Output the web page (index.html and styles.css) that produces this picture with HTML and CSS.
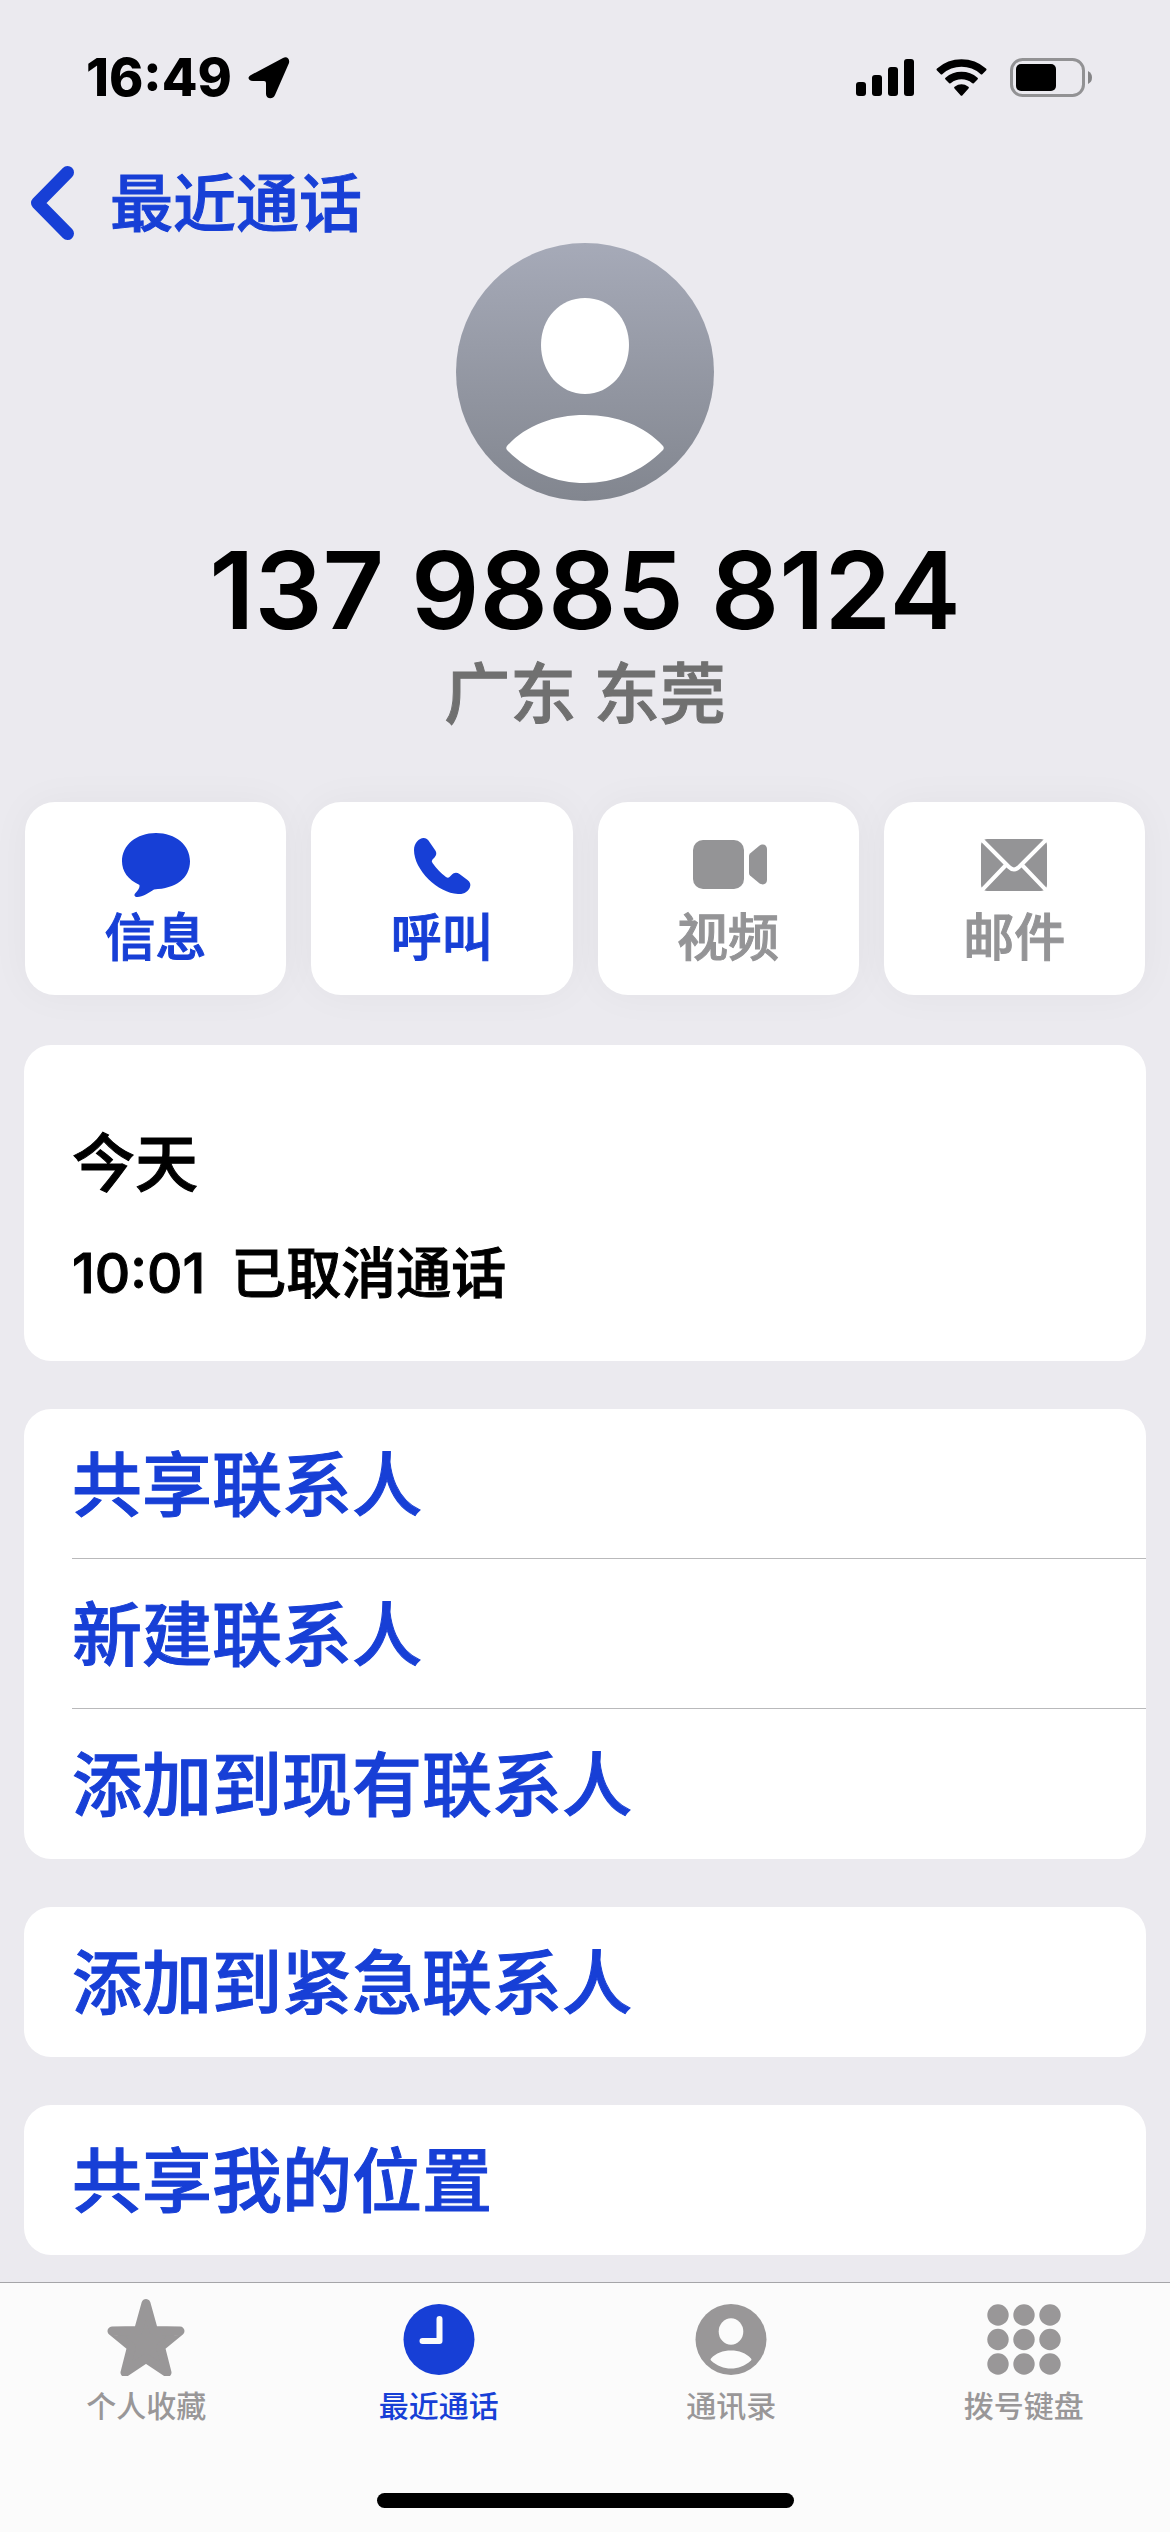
FILE: index.html
```html
<!DOCTYPE html>
<html lang="zh-CN">
<head>
<meta charset="utf-8">
<meta name="viewport" content="width=device-width, initial-scale=1">
<title>最近通话</title>
<link rel="stylesheet" href="styles.css">
</head>
<body>
<div class="screen">
  <header class="status-bar">
    <div class="status-left">
      <span class="clock">16:49</span>
      <svg class="location" width="42" height="42" viewBox="0 0 42 42" aria-hidden="true"><path d="M3 18 35 1c4-2 7 1 6 5L27 38c-2 5-9 4-9-1V26q0-2-2-2H5c-5 0-6-4-2-6z"/></svg>
    </div>
    <div class="status-right">
      <svg width="58" height="38" viewBox="0 0 58 38" aria-hidden="true"><rect y="23" width="10" height="14" rx="3"/><rect x="16" y="16" width="10" height="21" rx="3"/><rect x="32" y="8" width="10" height="29" rx="3"/><rect x="48" width="10" height="37" rx="3"/></svg>
      <svg width="52" height="38" viewBox="0 0 52 38" aria-hidden="true"><path d="M1 11.500Q0 10.500 1 9.600A36.500 36.500 0 0 1 50 9.600q1 .9 0 1.900l-3.500 3.500q-1 1-2 0a28.500 28.500 0 0 0-38 0q-1 1-2 0z"/><path d="M9.500 20.500q-1-1 0-1.800a24.500 24.500 0 0 1 32 0q1 .8 0 1.800L38 24q-1 1-2 .1a16.500 16.500 0 0 0-21 0q-1 .9-2-.1z"/><path d="M18.500 29.500q-1-1 .1-1.800a12 12 0 0 1 13.800 0q1.100.8.100 1.800l-6 6.700q-1 1-2 0z"/></svg>
      <svg width="82" height="40" viewBox="0 0 82 40" aria-hidden="true"><rect x="1.500" y="1.500" width="72" height="36" rx="11" fill="none" stroke="#929294" stroke-width="3"/><rect x="6" y="6" width="40" height="27" rx="5"/><path d="M78 13q4 2 4 6.500T78 26z" fill="#858587"/></svg>
    </div>
  </header>

  <nav class="nav-bar">
    <a class="back" href="#recents">
      <svg width="44" height="74" viewBox="0 0 44 74" aria-hidden="true"><path d="M37.500 6.500 7.500 37l30 30.500" fill="none" stroke="currentColor" stroke-width="13" stroke-linecap="round" stroke-linejoin="round"/></svg>
      <span>最近通话</span>
    </a>
  </nav>

  <main class="content">
    <section class="profile">
      <svg class="avatar" width="258" height="258" viewBox="0 0 258 258" aria-hidden="true">
        <defs><linearGradient id="avatar-fill" x1="0" y1="0" x2="0" y2="1"><stop offset="0" stop-color="#a6aab8"/><stop offset="1" stop-color="#82868f"/></linearGradient></defs>
        <circle cx="129" cy="129" r="129" fill="url(#avatar-fill)"/>
        <path d="M129 55c25 0 44 20 44 47s-19 49-44 49-44-22-44-49 19-47 44-47z" fill="#fff"/>
        <path d="M51 207c-1-1-1-3 0-4 18-20 46-31 78-31s60 11 78 31c1 1 1 3 0 4-22 22-49 33-78 33s-56-11-78-33z" fill="#fff"/>
      </svg>
      <h1 class="number">137 9885 8124</h1>
      <p class="region">广东 东莞</p>
    </section>

    <div class="actions">
      <button class="action" type="button">
        <svg width="70" height="66" viewBox="0 0 70 66" aria-hidden="true"><path d="M35 1c19.500 0 34 13.500 34 32 0 19-14.500 31-36 31.500-5 4-11.500 8-16.500 8.500-3 0-4-2-2-4.500 2.500-3 4.500-6 4-9C7 54 1 44 1 33 1 14.500 15.500 1 35 1z" transform="scale(1 .89)"/></svg>
        <span>信息</span>
      </button>
      <button class="action" type="button">
        <svg width="70" height="66" viewBox="0 0 70 66" aria-hidden="true"><path d="M7 18C7 11 12 6 16.500 6c2.500 0 4.500 1.500 6 4l5.500 8c2 3 1.500 5-.5 7.500l-2 2q-1.500 1.500 0 3.500 6 8.500 13.500 14 2 1.500 3.500 0l2-2c2.500-2.500 5-3 8-1l8 6c2.500 2 3.500 4 2.500 7-1.500 4.500-6 7.500-12 7C31 61 7 38 7 18z"/></svg>
        <span>呼叫</span>
      </button>
      <button class="action" type="button" disabled>
        <svg width="78" height="66" viewBox="-4 0 78 66" aria-hidden="true"><rect y="8" width="51" height="49" rx="10"/><path d="M56 24q0-1.500 1-2.500l9-7.500c4-3 8-1 8 3v31c0 4-4 6-8 3l-9-7.500q-1-1-1-2.500z"/></svg>
        <span>视频</span>
      </button>
      <button class="action" type="button" disabled>
        <svg width="68" height="66" viewBox="0 0 68 66" aria-hidden="true"><rect x="1" y="7" width="66" height="52" rx="6"/><path d="M1 7 29 35q5 5 10 0L67 7M1 59 26 33M67 59 42 33" fill="none" stroke="#fff" stroke-width="4"/></svg>
        <span>邮件</span>
      </button>
    </div>

    <section class="card history">
      <h2>今天</h2>
      <p><time>10:01</time><span>已取消通话</span></p>
    </section>

    <section class="card">
      <button class="row" type="button"><span>共享联系人</span></button>
      <button class="row" type="button"><span>新建联系人</span></button>
      <button class="row" type="button"><span>添加到现有联系人</span></button>
    </section>

    <section class="card">
      <button class="row" type="button"><span>添加到紧急联系人</span></button>
    </section>

    <section class="card">
      <button class="row" type="button"><span>共享我的位置</span></button>
    </section>
  </main>

  <footer class="tab-bar">
    <nav class="tabs">
      <a class="tab" href="#favorites">
        <svg width="78" height="78" viewBox="0 0 78 78" aria-hidden="true"><path d="M39 5.500 46.500 32.500 73 33 53.500 49 60 74.500 39 60.500 18 74.500 24.500 49 5 33 31.500 32.500z" fill="currentColor" stroke="currentColor" stroke-width="9" stroke-linejoin="round"/></svg>
        <span>个人收藏</span>
      </a>
      <a class="tab tab-active" href="#recents" aria-current="page">
        <svg width="78" height="78" viewBox="0 0 78 78" aria-hidden="true"><circle cx="39" cy="41.500" r="35.500"/><path d="M39.500 21v22H22.500" fill="none" stroke="#fbfbfb" stroke-width="6" stroke-linecap="round" stroke-linejoin="round"/></svg>
        <span>最近通话</span>
      </a>
      <a class="tab" href="#contacts">
        <svg width="78" height="78" viewBox="0 0 78 78" aria-hidden="true"><circle cx="39" cy="41.500" r="35.500"/><ellipse cx="39" cy="33.500" rx="12.300" ry="13.200" fill="#fbfbfb"/><path d="M19 62.500q-1-1 0-2c5-5.500 12-8 20-8s15 2.500 20 8q1 1 0 2c-6 5.500-13 8-20 8s-14-2.500-20-8z" fill="#fbfbfb"/></svg>
        <span>通讯录</span>
      </a>
      <a class="tab" href="#keypad">
        <svg width="78" height="78" viewBox="0 0 78 78" aria-hidden="true"><circle cx="13" cy="17" r="10.700"/><circle cx="39" cy="17" r="10.700"/><circle cx="65" cy="17" r="10.700"/><circle cx="13" cy="41.500" r="10.700"/><circle cx="39" cy="41.500" r="10.700"/><circle cx="65" cy="41.500" r="10.700"/><circle cx="13" cy="66" r="10.700"/><circle cx="39" cy="66" r="10.700"/><circle cx="65" cy="66" r="10.700"/></svg>
        <span>拨号键盘</span>
      </a>
    </nav>
    <div class="home-indicator"></div>
  </footer>
</div>
</body>
</html>
```
FILE: styles.css
```css
:root {
  --blue: #173fd6;
  --gray: #949496;
  --page: #ebeaef;
}

* {
  box-sizing: border-box;
}

body {
  margin: 0;
  background: var(--page);
  color: #000;
  font-family: Inter, "Noto Sans CJK SC", sans-serif;
  font-weight: 500;
}

h1, h2, p {
  margin: 0;
}

a {
  color: inherit;
  text-decoration: none;
}

button {
  border: 0;
  padding: 0;
  background: none;
  color: inherit;
  font: inherit;
}

svg {
  display: block;
  flex: none;
  fill: currentColor;
}

.screen {
  display: flex;
  flex-direction: column;
  min-height: 100vh;
}

.status-bar {
  display: flex;
  justify-content: space-between;
  align-items: center;
  padding: 48px 78px 0 86px;
}

.status-left,
.status-right {
  display: flex;
  align-items: center;
}

.status-left {
  gap: 16px;
}

.status-right {
  gap: 22px;
}

.clock {
  font-size: 52px;
  line-height: 60px;
  font-weight: 800;
}

.nav-bar {
  display: flex;
  padding: 55px 30px 0;
}

.back {
  display: flex;
  align-items: center;
  gap: 36px;
  color: var(--blue);
  font-size: 63px;
  line-height: 80px;
}

/* Semibold weight for the Chinese labels */
.back,
.region,
.action,
.history,
.row {
  -webkit-text-stroke: 1px currentColor;
}

.content {
  display: flex;
  flex-direction: column;
  gap: 48px;
  padding: 0 24px 27px;
}

.profile {
  display: flex;
  flex-direction: column;
  align-items: center;
}

.number {
  margin-top: 25px;
  font-size: 107px;
  line-height: 128px;
  font-weight: 600;
}

.region {
  color: #707070;
  font-size: 66px;
  line-height: 80px;
}

.actions {
  display: grid;
  grid-template-columns: repeat(4, 1fr);
  gap: 25px;
  margin: 20px 1px 2px;
}

.action {
  display: flex;
  flex-direction: column;
  align-items: center;
  gap: 8px;
  padding: 30px 0 25px;
  border-radius: 30px;
  background: #fff;
  box-shadow: 0 0 40px rgba(0, 0, 0, 0.04);
  color: var(--blue);
  font-size: 51px;
  line-height: 64px;
}

.action:disabled {
  color: var(--gray);
}

.card {
  border-radius: 27px;
  background: #fff;
  overflow: hidden;
}

.history {
  display: flex;
  flex-direction: column;
  gap: 32px;
  padding: 78px 48px 50px;
}

.history h2 {
  font-size: 63px;
  font-weight: 500;
  line-height: 80px;
}

.history p {
  display: flex;
  gap: 26px;
  font-size: 55px;
  line-height: 76px;
}

.row {
  display: block;
  width: 100%;
  padding-left: 48px;
  color: var(--blue);
  font-size: 70px;
  line-height: 146px;
  text-align: left;
}

.row span {
  display: block;
  padding-top: 4px;
}

.row + .row span {
  box-shadow: 0 -1px #b9b9bb;
}

.tab-bar {
  display: flex;
  flex-direction: column;
  flex: 1;
  justify-content: space-between;
  gap: 64px;
  padding-bottom: 24px;
  border-top: 1px solid #a5a5a8;
  background: #fbfbfb;
}

.tabs {
  display: grid;
  grid-template-columns: repeat(4, 1fr);
  padding-top: 15px;
}

.tab {
  display: flex;
  flex-direction: column;
  align-items: center;
  gap: 12px;
  color: #999798;
  font-size: 30px;
  line-height: 36px;
}

.tab-active {
  color: var(--blue);
}

.home-indicator {
  align-self: center;
  width: 417px;
  height: 15px;
  border-radius: 8px;
  background: #000;
}
```
